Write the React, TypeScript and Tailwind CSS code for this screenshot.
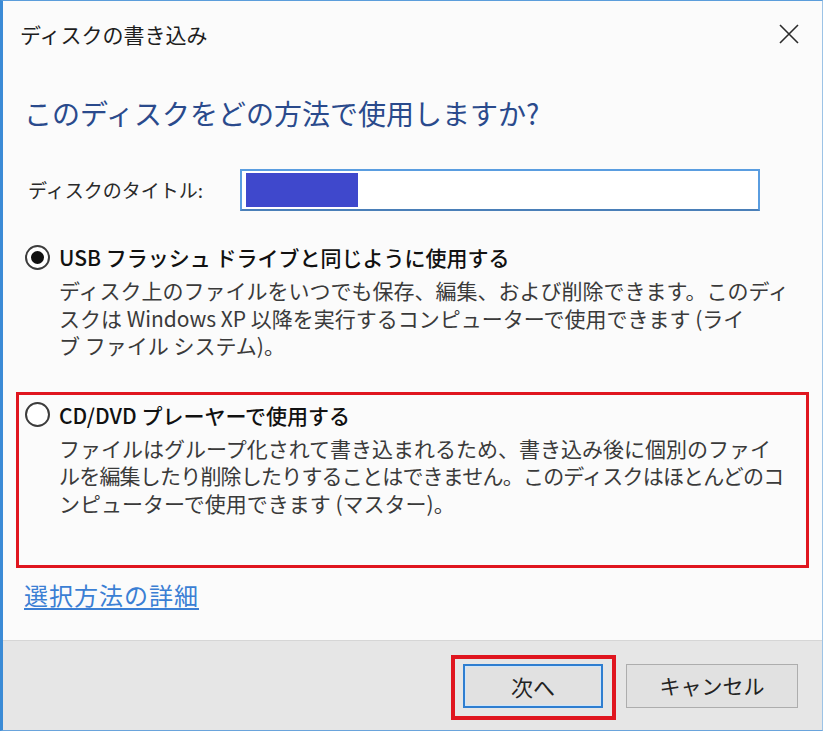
import React from 'react';

const font = { fontFamily: '"Noto Sans CJK JP", "Noto Sans", sans-serif' };

const Radio: React.FC<{ checked?: boolean }> = ({ checked = false }) => (
  <span className="flex h-[25px] w-[25px] shrink-0 items-center justify-center rounded-full border-2 border-[#3c3c3c] bg-white">
    {checked && <span className="h-[13px] w-[13px] rounded-full bg-[#111]" />}
  </span>
);

interface OptionProps {
  checked?: boolean;
  label: string;
  lines: string[];
  tightLine?: number;
  highlighted?: boolean;
}

const Option: React.FC<OptionProps> = ({ checked, label, lines, tightLine, highlighted }) => (
  <div
    className={
      highlighted
        ? 'border-[3px] border-[#e0161f] pl-[6px] pt-[5px] pb-[48px]'
        : 'border-[3px] border-transparent pl-[6px]'
    }
  >
    <div className="flex h-[30px] items-center gap-[9px]">
      <Radio checked={checked} />
      <span className="text-[21px] font-medium leading-[30px] text-[#111] whitespace-nowrap">{label}</span>
    </div>
    <div className="mt-[5px] pl-[34px] text-[21px] leading-[27.5px] text-[#3a3a3a]">
      {lines.map((l, i) => (
        // the longest line is squeezed a little so it stays inside the frame
        <div key={l} className={i === tightLine ? 'whitespace-nowrap tracking-[-0.8px]' : 'whitespace-nowrap'}>
          {l}
        </div>
      ))}
    </div>
  </div>
);

export default function App() {
  return (
    <div className="h-[732px] w-[826px] overflow-hidden bg-white" style={font}>
      <div className="flex h-[731px] w-[823px] flex-col border-l-[3px] border-t border-r border-b border-l-[#3b8bd6] border-t-[#5b9ddb] border-r-[#9cc3e6] border-b-[#6aa4dc] bg-[#fbfbfb]">
        {/* title bar */}
        <div className="flex h-[66px] items-center justify-between pl-[17px] pr-[23px]">
          <span className="text-[21px] leading-[30px] text-[#1e1e1e]">ディスクの書き込み</span>
          <svg width="20" height="20" viewBox="0 0 20 20" className="text-[#2b2b2b]">
            <path d="M1 1 L19 19 M19 1 L1 19" stroke="currentColor" strokeWidth="1.6" fill="none" />
          </svg>
        </div>

        <div className="flex-1">
          <h1 className="mt-[28px] pl-[21px] text-[28px] leading-[36px] font-normal text-[#2a4a8c]">
            このディスクをどの方法で使用しますか?
          </h1>

          <div className="mt-[38px] flex items-center pl-[25px]">
            <span className="w-[212px] text-[19px] leading-[42px] text-[#2a2a2a]">ディスクのタイトル:</span>
            <div className="flex h-[42px] w-[520px] items-center border-2 border-[#5a9de0] border-b-[#4a7fb8] bg-white px-[4px]">
              <div className="h-[34px] w-[112px] bg-[#3f48cc]" />
            </div>
          </div>

          <div className="mt-[28px] flex flex-col gap-[29px] px-[13px]">
            <Option
              checked
              label="USB フラッシュ ドライブと同じように使用する"
              lines={[
                'ディスク上のファイルをいつでも保存、編集、および削除できます。このディ',
                'スクは Windows XP 以降を実行するコンピューターで使用できます (ライ',
                'ブ ファイル システム)。',
              ]}
            />
            <Option
              highlighted
              tightLine={1}
              label="CD/DVD プレーヤーで使用する"
              lines={[
                'ファイルはグループ化されて書き込まれるため、書き込み後に個別のファイ',
                'ルを編集したり削除したりすることはできません。このディスクはほとんどのコ',
                'ンピューターで使用できます (マスター)。',
              ]}
            />
          </div>

          <a className="mt-[12px] ml-[21px] inline-block text-[24px] leading-[30px] tracking-[1px] text-[#3b7fd4] underline underline-offset-[3px]">
            選択方法の詳細
          </a>
        </div>

        {/* footer */}
        <div className="flex h-[90px] items-start justify-end gap-[23px] border-t border-[#d6d6d6] bg-[#e6e6e6] pr-[24px] pt-[23px]">
          <div className="relative">
            <button className="flex h-[44px] w-[140px] items-center justify-center border-2 border-[#2f7ed0] bg-[#e1e1e1] text-[22px] text-[#222] shadow-[inset_0_0_0_1px_#cfe6fb]">
              次へ
            </button>
            <div className="pointer-events-none absolute -left-[12px] -top-[9px] h-[65px] w-[165px] border-[4px] border-[#e0161f]" />
          </div>
          <button className="flex h-[44px] w-[172px] items-center justify-center border border-[#adadad] bg-[#e1e1e1] text-[21px] text-[#222]">
            キャンセル
          </button>
        </div>
      </div>
    </div>
  );
}
